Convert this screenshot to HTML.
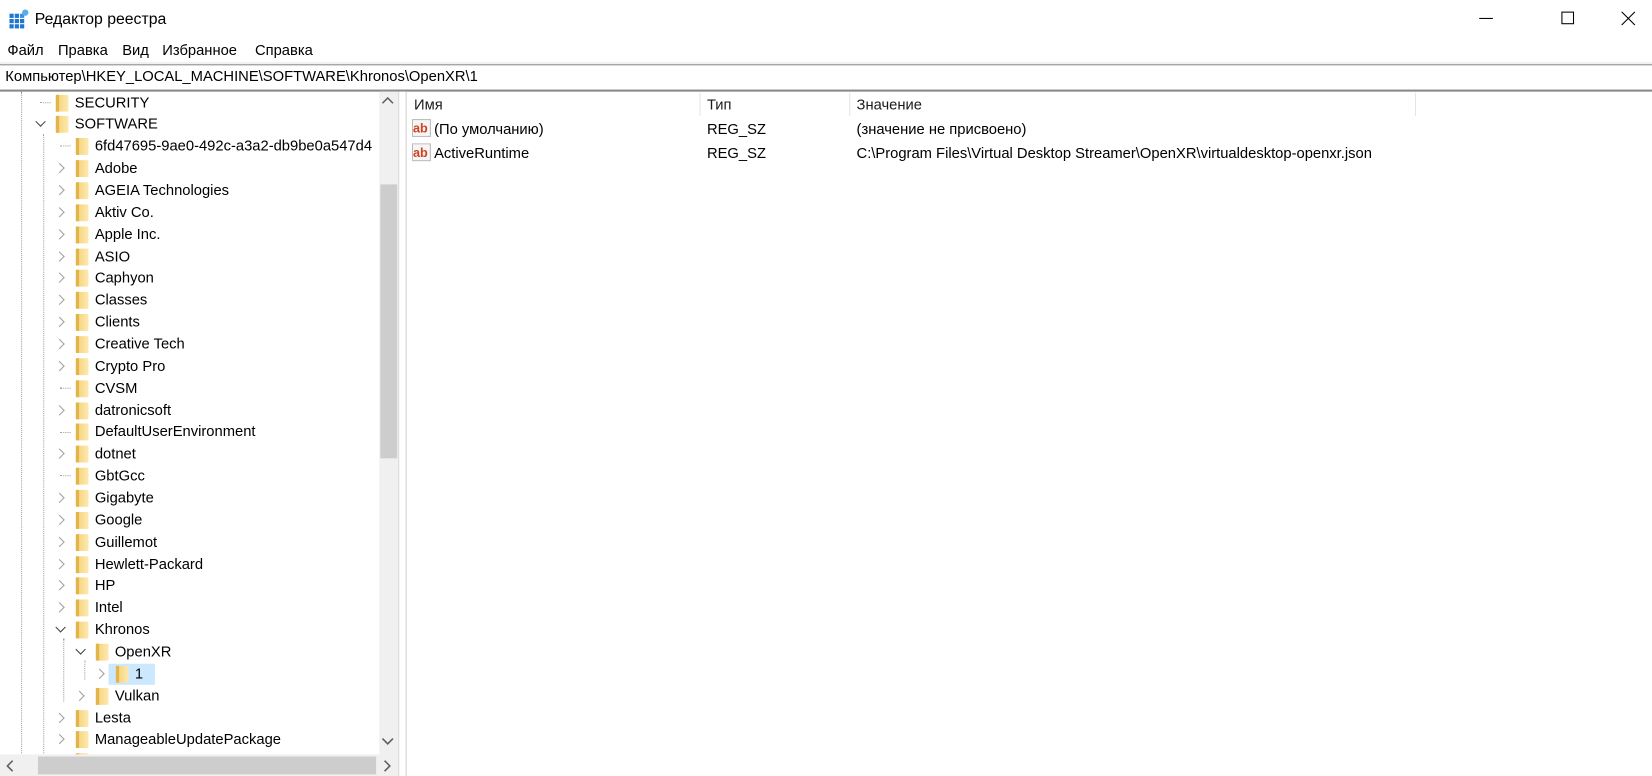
<!DOCTYPE html>
<html><head><meta charset="utf-8"><style>
*{margin:0;padding:0;box-sizing:border-box}
html{width:1652px;height:776px;overflow:hidden;background:#fff}
body{width:1568px;height:737px;background:#fff;font-family:"Liberation Sans","Noto Sans CJK SC",sans-serif;font-size:14px;color:#000;position:relative;overflow:hidden;transform:scale(1.05357);transform-origin:0 0}
.a{position:absolute;white-space:nowrap}
.f{position:absolute;width:12px;height:16px;background:linear-gradient(90deg,#f0c860 0,#f8d98a 35%,#fde9b0 100%);border-radius:1px}
.f:before{content:"";position:absolute;left:0;top:0;width:3px;height:16px;background:#e2b54c}
.vl{position:absolute;border-left:1px dotted #a0a0a0;width:0}
.hl{position:absolute;border-top:1px dotted #a0a0a0;height:0}
.chev{position:absolute;width:7px;height:7px;border-right:1.5px solid #a0a0a0;border-bottom:1.5px solid #a0a0a0;transform:rotate(-45deg)}
.down{position:absolute;width:7px;height:7px;border-right:1.5px solid #404040;border-bottom:1.5px solid #404040;transform:rotate(45deg)}
</style></head><body>
<svg class="a" style="left:8px;top:8px" width="20" height="20" viewBox="0 0 20 20">
<rect x="1" y="5" width="4" height="4" fill="#1e78d2"/><rect x="6" y="5" width="4" height="4" fill="#1e78d2"/><rect x="11" y="5" width="4" height="4" fill="#3a90e0"/>
<rect x="1" y="10" width="4" height="4" fill="#1e78d2"/><rect x="6" y="10" width="4" height="4" fill="#1e78d2"/><rect x="11" y="10" width="4" height="4" fill="#1e78d2"/>
<rect x="1" y="15" width="4" height="4" fill="#1e78d2"/><rect x="6" y="15" width="4" height="4" fill="#1e78d2"/><rect x="11" y="15" width="4" height="4" fill="#1e78d2"/>
<circle cx="16" cy="4" r="3" fill="#5aaee8"/></svg>
<div class="a" style="left:33px;top:10px;font-size:15px">Редактор реестра</div>
<div class="a" style="left:1404px;top:17px;width:13px;border-top:1px solid #000"></div>
<div class="a" style="left:1482px;top:11px;width:12px;height:12px;border:1px solid #000"></div>
<svg class="a" style="left:1539px;top:11px" width="13" height="13"><path d="M0 0L13 13M13 0L0 13" stroke="#000" stroke-width="1"/></svg>
<div class="a" style="left:7px;top:39px">Файл</div>
<div class="a" style="left:55px;top:39px">Правка</div>
<div class="a" style="left:116px;top:39px">Вид</div>
<div class="a" style="left:154px;top:39px">Избранное</div>
<div class="a" style="left:242px;top:39px">Справка</div>
<div class="a" style="left:0;top:59px;width:1652px;height:2px;background:#f0f0f0"></div>
<div class="a" style="left:0;top:61px;width:1652px;border-top:1px solid #8a8a8a"></div>
<div class="a" style="left:5px;top:64px">Компьютер\HKEY_LOCAL_MACHINE\SOFTWARE\Khronos\OpenXR\1</div>
<div class="a" style="left:0;top:85px;width:1652px;border-top:2px solid #8a8a8a"></div>
<div class="a" style="left:0;top:87px;width:379px;height:650px;border-right:1px solid #d0d0d0"></div>
<div class="vl" style="left:20px;top:87px;height:628px"></div>
<div class="vl" style="left:41px;top:127px;height:588px"></div>
<div class="vl" style="left:60px;top:606px;height:60px"></div>
<div class="vl" style="left:80px;top:627px;height:18px"></div>
<div class="hl" style="left:38px;top:97px;width:10px"></div>
<div class="hl" style="left:57px;top:138px;width:10px"></div>
<div class="hl" style="left:57px;top:368px;width:10px"></div>
<div class="hl" style="left:57px;top:410px;width:10px"></div>
<div class="hl" style="left:57px;top:451px;width:10px"></div>
<div id="tree"></div>
<script>
var items=[[0,"SECURITY","l"],[0,"SOFTWARE","o"],[1,"6fd47695-9ae0-492c-a3a2-db9be0a547d4","l"],[1,"Adobe","c"],[1,"AGEIA Technologies","c"],[1,"Aktiv Co.","c"],[1,"Apple Inc.","c"],[1,"ASIO","c"],[1,"Caphyon","c"],[1,"Classes","c"],[1,"Clients","c"],[1,"Creative Tech","c"],[1,"Crypto Pro","c"],[1,"CVSM","l"],[1,"datronicsoft","c"],[1,"DefaultUserEnvironment","l"],[1,"dotnet","c"],[1,"GbtGcc","l"],[1,"Gigabyte","c"],[1,"Google","c"],[1,"Guillemot","c"],[1,"Hewlett-Packard","c"],[1,"HP","c"],[1,"Intel","c"],[1,"Khronos","o"],[2,"OpenXR","o"],[3,"1","c"],[2,"Vulkan","c"],[1,"Lesta","c"],[1,"ManageableUpdatePackage","c"],[1,"","c"]];
var h="";
items.forEach(function(it,i){var top=87+20.86*i,c=top+10.5,lv=it[0],fx=53+19*lv,tx=71+19*lv,ax=38+19*lv;
if(i==26){h+='<div class="a" style="left:103px;top:'+(top+1)+'px;width:44px;height:20px;background:#cce8ff"></div>';}
if(it[2]=="c")h+='<div class="chev" style="left:'+(ax-4)+'px;top:'+(c-4)+'px"></div>';
if(it[2]=="o")h+='<div class="down" style="left:'+(ax-3.5)+'px;top:'+(c-6)+'px"></div>';
h+='<div class="f" style="left:'+fx+'px;top:'+(c-8)+'px"></div>';
h+='<div class="a" style="left:'+tx+'px;top:'+(c-9)+'px">'+it[1]+'</div>';});
document.getElementById('tree').innerHTML=h;
</script>
<div class="a" style="left:360px;top:87px;width:18px;height:629px;background:#f0f0f0"></div>
<div class="a" style="left:361px;top:175px;width:16px;height:260px;background:#cdcdcd"></div>
<svg class="a" style="left:362px;top:92px" width="12" height="8"><path d="M1 6L6 1L11 6" fill="none" stroke="#606060" stroke-width="1.5"/></svg>
<svg class="a" style="left:362px;top:700px" width="12" height="8"><path d="M1 1L6 6L11 1" fill="none" stroke="#606060" stroke-width="1.5"/></svg>
<div class="a" style="left:0;top:716px;width:378px;height:21px;background:#f0f0f0"></div>
<div class="a" style="left:36px;top:718px;width:321px;height:17px;background:#cdcdcd"></div>
<svg class="a" style="left:6px;top:721px" width="8" height="12"><path d="M6 1L1 6L6 11" fill="none" stroke="#606060" stroke-width="1.5"/></svg>
<svg class="a" style="left:364px;top:721px" width="8" height="12"><path d="M1 1L6 6L1 11" fill="none" stroke="#606060" stroke-width="1.5"/></svg>
<div class="a" style="left:379px;top:87px;width:7px;height:650px;background:#fff;border-right:1px solid #d0d0d0"></div>
<div class="a" style="left:664px;top:88px;height:22px;border-left:1px solid #e5e5e5"></div>
<div class="a" style="left:806px;top:88px;height:22px;border-left:1px solid #e5e5e5"></div>
<div class="a" style="left:1343px;top:88px;height:22px;border-left:1px solid #e5e5e5"></div>
<div class="a" style="left:393px;top:91px;color:#1a1a1a">Имя</div>
<div class="a" style="left:671px;top:91px;color:#1a1a1a">Тип</div>
<div class="a" style="left:813px;top:91px;color:#1a1a1a">Значение</div>
<svg class="a" style="left:391px;top:113px" width="20" height="18"><rect x="0.5" y="0.5" width="17" height="16" fill="#f5f5f5" stroke="#bbb"/><text x="1" y="13" font-family="Liberation Sans" font-weight="bold" font-size="12" fill="#d04020">ab</text></svg>
<svg class="a" style="left:391px;top:136px" width="20" height="18"><rect x="0.5" y="0.5" width="17" height="16" fill="#f5f5f5" stroke="#bbb"/><text x="1" y="13" font-family="Liberation Sans" font-weight="bold" font-size="12" fill="#d04020">ab</text></svg>
<div class="a" style="left:412px;top:114px">(По умолчанию)</div>
<div class="a" style="left:671px;top:114px">REG_SZ</div>
<div class="a" style="left:813px;top:114px">(значение не присвоено)</div>
<div class="a" style="left:412px;top:137px">ActiveRuntime</div>
<div class="a" style="left:671px;top:137px">REG_SZ</div>
<div class="a" style="left:813px;top:137px">C:\Program Files\Virtual Desktop Streamer\OpenXR\virtualdesktop-openxr.json</div>
</body></html>
